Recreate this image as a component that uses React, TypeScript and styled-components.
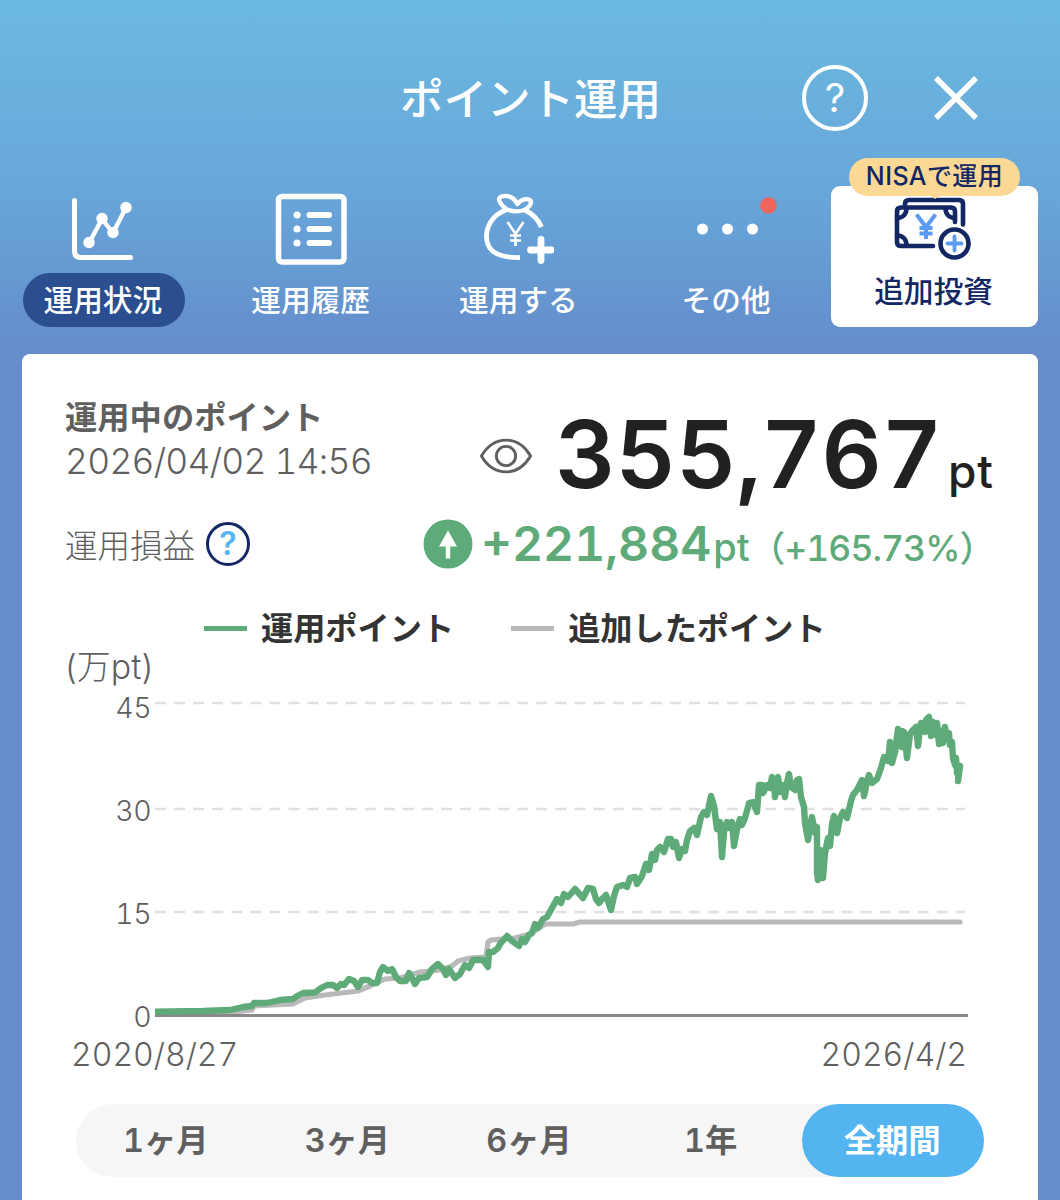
import React from "react";
import styled, { createGlobalStyle, css } from "styled-components";

const sans = `Inter, "Noto Sans CJK JP", sans-serif`;
const cjk = `"Noto Sans CJK JP", Inter, sans-serif`;

const figures = css`
  font-optical-sizing: none;
  font-variant-numeric: tabular-nums;
  font-kerning: none;
`;

const Global = createGlobalStyle`
  * { box-sizing: border-box; }
  body {
    margin: 0;
    font-family: ${sans};
  }
`;

const Screen = styled.main`
  width: 1060px;
  height: 1200px;
  overflow: hidden;
  display: flex;
  flex-direction: column;
  background: linear-gradient(#6bb9e1 0, #69aedc 120px, #68a5d9 200px, #659ad2 270px, #658ccb 350px, #658ccb 100%);
`;

const Header = styled.header`
  height: 185px;
  padding: 10px 81px 0 0;
  display: grid;
  grid-template-columns: 400px 260px 1fr;
  align-items: center;
`;

const Title = styled.h1`
  grid-column: 2;
  margin: 0;
  padding-bottom: 2px;
  font: 500 43.5px/60px ${cjk};
  color: #fff;
  white-space: nowrap;
`;

const HeaderActions = styled.div`
  display: flex;
  justify-content: flex-end;
  align-items: center;
  gap: 65px;
`;

const IconButton = styled.button`
  border: 0;
  padding: 0;
  background: none;
  display: flex;
  color: inherit;
`;

const HelpRing = styled.span<{ $size: number; $border: number; $ring: string; $mark: string; $font: number; $weight: number }>`
  width: ${(p) => p.$size}px;
  height: ${(p) => p.$size}px;
  border: ${(p) => p.$border}px solid ${(p) => p.$ring};
  border-radius: 50%;
  display: flex;
  align-items: center;
  justify-content: center;
  font: ${(p) => p.$weight} ${(p) => p.$font}px/1 ${sans};
  color: ${(p) => p.$mark};
`;

const Nav = styled.nav`
  height: 169px;
  display: grid;
  grid-template-columns: repeat(4, 207.75px) 207px;
`;

const NavItem = styled.a`
  display: flex;
  flex-direction: column;
  align-items: center;
  color: #fff;
`;

const NavIcon = styled.span<{ $shift?: number }>`
  height: 88px;
  padding: 0 ${(p) => p.$shift ?? 2}px 1px 0;
  display: flex;
  align-items: center;
`;

const NavLabel = styled.span<{ $active?: boolean }>`
  height: 54px;
  padding: 0 23px 0 21px;
  border-radius: 27px;
  background: ${(p) => (p.$active ? "#2a4e8f" : "transparent")};
  font: 500 29.7px/51px ${cjk};
  white-space: nowrap;
`;

const InvestCard = styled.a`
  position: relative;
  height: 141px;
  margin-top: 1px;
  padding-top: 9px;
  border-radius: 9px;
  background: #fff;
  display: flex;
  flex-direction: column;
  align-items: center;
  color: #132765;
`;

const InvestLabel = styled.span`
  margin-top: 2px;
  padding-right: 2px;
  font: 500 29.7px/54px ${cjk};
`;

const Badge = styled.span`
  position: absolute;
  top: -28px;
  left: 18px;
  width: 171px;
  height: 38px;
  border-radius: 19px;
  background: #fbd995;
  font: 500 25px/37px ${sans};
  letter-spacing: 0.4px;
  text-align: center;
  white-space: nowrap;
  &::after {
    content: "";
    position: absolute;
    left: 80px;
    top: 37px;
    border: 6px solid transparent;
    border-top: 4px solid #fbd995;
    border-bottom: 0;
  }
`;

const Card = styled.section`
  flex: 1;
  margin: 0 22px;
  padding: 39px 44px 0 43px;
  border-radius: 8px 8px 0 0;
  background: #fff;
  color: #5f5f5f;
`;

const BalanceRow = styled.div`
  height: 112px;
  display: flex;
  justify-content: space-between;
`;

const Heading = styled.h2`
  margin: 0;
  font: 700 32.3px/44px ${cjk};
`;

const Stamp = styled.time`
  display: block;
  font: 300 35.5px/49px ${sans};
  letter-spacing: -0.78px;
  ${figures}
`;

const Balance = styled.div`
  display: flex;
  align-items: baseline;
  color: #232021;
`;

const EyeBox = styled.span`
  align-self: center;
  display: flex;
  margin: 14px 22px 0 0;
`;

const BigNumber = styled.strong`
  font: 600 94px/122px ${sans};
  letter-spacing: -0.5px;
  ${figures}
`;

const Unit = styled.span<{ $size: number; $gap?: number; $weight?: number; $spacing?: number }>`
  margin-left: ${(p) => p.$gap ?? 0}px;
  font: ${(p) => p.$weight ?? 500} ${(p) => p.$size}px/1 ${sans};
  letter-spacing: ${(p) => p.$spacing ?? 0}px;
  ${figures}
`;

const ProfitRow = styled.div`
  height: 95px;
  display: flex;
  justify-content: space-between;
  align-items: flex-start;
  padding-top: 14px;
`;

const ProfitLabel = styled.div`
  height: 50px;
  display: flex;
  align-items: center;
  gap: 11px;
  font: 300 32.5px/48px ${cjk};
`;

const Profit = styled.div`
  display: flex;
  align-items: baseline;
  color: #5faa79;
`;

const ArrowDot = styled.span`
  align-self: center;
  display: flex;
  margin-right: 8px;
`;

const ProfitNumber = styled.span`
  font: 600 48px/50px ${sans};
  ${figures}
`;

const Legend = styled.div`
  height: 52px;
  padding-left: 139px;
  display: flex;
  align-items: center;
`;

const LegendItem = styled.span<{ $color: string }>`
  display: flex;
  align-items: center;
  gap: 14px;
  margin-right: 57px;
  font: 700 32.2px/48px ${cjk};
  color: #333;
  &::before {
    content: "";
    width: 43px;
    height: 5px;
    margin-top: 4px;
    background: ${(p) => p.$color};
  }
`;

const AxisUnit = styled.div`
  height: 36px;
  font: 300 34px/30px ${sans};
`;

const Plot = styled.div`
  display: grid;
  grid-template-columns: 86px 1fr;
  column-gap: 4px;
  height: 336px;
`;

const Ticks = styled.div`
  margin-top: -32px;
  font: 300 28.5px/103px ${sans};
  letter-spacing: -0.6px;
  ${figures}
  text-align: right;
`;

const Dates = styled.div`
  height: 72px;
  padding: 0 27px 0 6px;
  display: flex;
  justify-content: space-between;
  font: 300 32px/62px ${sans};
  ${figures}
`;

const Periods = styled.div`
  height: 73px;
  margin: 8px 10px 0 11px;
  border-radius: 37px;
  background: #f6f6f6;
  display: grid;
  grid-template-columns: repeat(5, 1fr);
`;

const Period = styled.button<{ $on: boolean }>`
  border: 0;
  padding: 0 2px 0 0;
  border-radius: 37px;
  background: ${(p) => (p.$on ? "#54b4f0" : "transparent")};
  color: ${(p) => (p.$on ? "#fff" : "#5f5f5f")};
  font: 600 32.3px/72px ${sans};
  font-variant-numeric: tabular-nums;
`;

const growth =
  "155,1011.7 203,1011 230,1010 243,1007 252,1006 254,1003 267,1003 280,1000 293,999 297,996 303,993 315,992.5 321,988 327,985 333,985 337,988 341,984 344,985 349,979 354,981 358,987 362,980 368,980 372,983 377,983 380,972 383,967 388,971 392,969 396,977 400,981 406,981 409,973 412,978 415,984 419,978 427,977 432,969 438,964 443,969 446,975 449,969 455,978 460,974 465,965 469,968 473,960 483,960 488,967 489,952 493,952 498,948 500,944 507,936 512,941 519,946 522,939 525,942 529,935 532,933 535,924 538,928 543,919 547,917 552,908 557,899 561,903 564,894 568,897 575,889 583,898 588,888 593,889 596,899 599,903 602,899 606,895 611,910 614,896 617,887 623,885 627,887 630,878 635,877 637,884 642,876 646,864 649,870 652,854 655,860 657,850 660,847 664,852 668,839 671,839 673,847 676,842 679,858 682,849 685,851 687,840 690,831 694,828 697,835 701,817 704,812 707,815 711,796 714,806 717,829 720,822 722,857 724,832 727,822 730,828 732,822 734,846 737,829 740,819 742,825 745,818 749,803 753,802 757,812 759,785 762,785 763,793 767,785 770,788 772,777 774,783 775,797 777,783 778,777 780,792 783,785 785,797 787,783 789,774 791,787 795,790 797,780 799,779 801,797 804,807 805,823 808,840 810,825 812,817 815,833 817,827 817,873 818,880 820,850 821,872 823,878 825,853 828,838 830,846 832,824 834,816 837,833 840,818 843,812 847,818 851,801 853,795 857,790 862,780 864,796 867,781 869,775 872,783 877,779 881,768 884,757 888,761 890,742 892,763 895,752 898,729 900,746 902,731 902,747 904,732 907,758 910,734 913,730 916,727 918,746 920,729 921,723 925,732 926,720 929,717 931,736 933,722 936,735 937,723 939,744 941,731 943,743 945,727 947,739 949,733 950,745 952,742 953,758 955,765 956,758 957,773 959,768 958,781 960,766";

const deposits =
  "155,1013 235,1012 252,1010 254,1006 293,1004 305,998 325,995 358,991 370,986 385,979 400,978 420,972 440,970 452,966 458,961 470,958 486,957 488,942 491,940 515,938 530,934 545,924 573,924 580,922 960,922";

const periods = ["1ヶ月", "3ヶ月", "6ヶ月", "1年", "全期間"];

const CloseIcon = () => (
  <svg width="46" height="46" viewBox="0 0 46 46" fill="none" stroke="#fff" strokeWidth="5.600">
    <path d="M3 3 43 43M43 3 3 43" />
  </svg>
);

const TrendIcon = () => (
  <svg width="64" height="64" viewBox="0 0 64 64" fill="none" stroke="#fff" strokeWidth="5" strokeLinecap="round" strokeLinejoin="round">
    <path d="M4.500 3.500V54q0 6.500 6.500 6.500H60.500" />
    <path d="M19 46 32 22 43 36 56 10.500" strokeWidth="4.400" />
    <g fill="#fff" stroke="none">
      <circle cx="19" cy="45.500" r="5.700" />
      <circle cx="32" cy="21.500" r="5.700" />
      <circle cx="43" cy="35.500" r="5.700" />
      <circle cx="56" cy="10.500" r="5.700" />
    </g>
  </svg>
);

const ListIcon = () => (
  <svg width="72" height="72" viewBox="0 0 72 72" fill="none" stroke="#fff" strokeWidth="5.500">
    <rect x="3.500" y="3.500" width="65.500" height="65.500" rx="3.500" />
    <path d="M34.500 22H54M34.500 36H54M34.500 50H54" strokeWidth="6" strokeLinecap="round" />
    <g fill="#fff" stroke="none">
      <circle cx="22" cy="22" r="3.600" />
      <circle cx="22" cy="36" r="3.600" />
      <circle cx="22" cy="50" r="3.600" />
    </g>
  </svg>
);

const BagIcon = () => (
  <svg width="72" height="72" viewBox="0 0 72 72" fill="none" stroke="#fff" strokeWidth="4.800">
    <path d="M24 17C10 22 4 34 4.500 45c1 14 12 20 33.500 19.500" />
    <path d="M43 17c8 4 13 9 16.500 17" />
    <path d="M24 16C17 10 15 5 19.500 3.500c6-2 13 1 16 7.500 4-5 10-6 13-3.500 2 3-2 7-6 9.500-6 2-12 2-18.500-1Z" strokeLinejoin="round" strokeWidth="4.400" />
    <path d="M25.500 29 33.500 41 41.500 29M33.500 41V53M28 42.500H39M28 47.500H39" strokeWidth="2.600" />
    <path d="M59 46.500V67.500M48.500 57H69.500" strokeWidth="6.800" strokeLinecap="round" />
  </svg>
);

const MoreIcon = () => (
  <svg width="84" height="60" viewBox="0 0 84 60" fill="#fff" overflow="visible">
    <circle cx="17.500" cy="30" r="5.500" />
    <circle cx="42.500" cy="30" r="5.500" />
    <circle cx="67.500" cy="30" r="5.500" />
    <circle cx="83.500" cy="6.500" r="8.300" fill="#ee655b" />
  </svg>
);

const CashIcon = () => (
  <svg width="81" height="66" viewBox="0 0 81 66" fill="none" stroke="#132765" strokeWidth="4.600" strokeLinecap="round" strokeLinejoin="round">
    <path d="M11 10V9q0-4 4-4H65q4 0 4 4V29.500" />
    <path d="M39 51H7q-4 0-4-4V16.500q0-4 4-4H57q4 0 4 4V27" />
    <path d="M3 23c6 0 9.500-4 9.500-10M61 23c-6 0-9.500-4-9.500-10M3 40.500c6 0 9.500 4 9.500 10" />
    <path d="M22.500 19.500 32 32 41.500 19.500M32 32V44M25.500 33H38.500M25.500 38.500H38.500" stroke="#5a9af3" strokeWidth="4" strokeLinecap="butt" />
    <circle cx="60.500" cy="48.500" r="14" />
    <path d="M60.500 41.500V55.500M53.500 48.500H67.500" stroke="#5a9af3" strokeWidth="3.800" />
  </svg>
);

const EyeIcon = () => (
  <svg width="54" height="38" viewBox="0 0 56 38" fill="none" stroke="#5f5f5f" strokeWidth="3">
    <path d="M2.500 19C9 8 18 2.500 28 2.500S47 8 53.500 19C47 30 38 35.500 28 35.500S9 30 2.500 19Z" strokeLinejoin="round" />
    <circle cx="28" cy="19" r="10" />
  </svg>
);

const UpIcon = () => (
  <svg width="50" height="50" viewBox="0 0 50 50">
    <circle cx="25" cy="25" r="24.500" fill="#5faa79" />
    <path d="M25 11.500 34 27.500H27.200V39.500H22.800V27.500H16Z" fill="#fff" />
  </svg>
);

const Chart = () => (
  <svg width="840" height="336" viewBox="155 688 840 336" fill="none">
    <path d="M155 703H965M155 809H965M155 912H965" stroke="#e0e0e0" strokeWidth="2.500" strokeDasharray="11 8.070" />
    <polyline points={deposits} stroke="#b9b9b9" strokeWidth="5.200" strokeLinejoin="round" strokeLinecap="round" />
    <path d="M155 1015.500H968" stroke="#888" strokeWidth="2.800" />
    <polyline points={growth} stroke="#5faa79" strokeWidth="6.400" strokeLinejoin="round" strokeLinecap="round" />
  </svg>
);

export default function App() {
  return (
    <Screen>
      <Global />
      <Header>
        <Title>ポイント運用</Title>
        <HeaderActions>
          <IconButton>
            <HelpRing $size={66} $border={4.5} $ring="#fff" $mark="#fff" $font={40} $weight={400}>?</HelpRing>
          </IconButton>
          <IconButton><CloseIcon /></IconButton>
        </HeaderActions>
      </Header>
      <Nav>
        <NavItem>
          <NavIcon $shift={4}><TrendIcon /></NavIcon>
          <NavLabel $active>運用状況</NavLabel>
        </NavItem>
        <NavItem>
          <NavIcon><ListIcon /></NavIcon>
          <NavLabel>運用履歴</NavLabel>
        </NavItem>
        <NavItem>
          <NavIcon><BagIcon /></NavIcon>
          <NavLabel>運用する</NavLabel>
        </NavItem>
        <NavItem>
          <NavIcon $shift={0}><MoreIcon /></NavIcon>
          <NavLabel>その他</NavLabel>
        </NavItem>
        <InvestCard>
          <Badge>NISAで運用</Badge>
          <CashIcon />
          <InvestLabel>追加投資</InvestLabel>
        </InvestCard>
      </Nav>
      <Card>
        <BalanceRow>
          <div>
            <Heading>運用中のポイント</Heading>
            <Stamp>2026/04/02 14:56</Stamp>
          </div>
          <Balance>
            <EyeBox><EyeIcon /></EyeBox>
            <BigNumber>355,767</BigNumber>
            <Unit $size={46} $gap={6} $spacing={1}>pt</Unit>
          </Balance>
        </BalanceRow>
        <ProfitRow>
          <ProfitLabel>
            運用損益
            <HelpRing $size={44} $border={3} $ring="#132765" $mark="#54b4f0" $font={32} $weight={600}>?</HelpRing>
          </ProfitLabel>
          <Profit>
            <ArrowDot><UpIcon /></ArrowDot>
            <ProfitNumber>+221,884</ProfitNumber>
            <Unit $size={38} $gap={2}>pt</Unit>
            <Unit $size={35.5} $spacing={-0.95}>（+165.73%）</Unit>
          </Profit>
        </ProfitRow>
        <Legend>
          <LegendItem $color="#5faa79">運用ポイント</LegendItem>
          <LegendItem $color="#b9b9b9">追加したポイント</LegendItem>
        </Legend>
        <AxisUnit>(万pt)</AxisUnit>
        <Plot>
          <Ticks>
            <div>45</div>
            <div>30</div>
            <div>15</div>
            <div>0</div>
          </Ticks>
          <Chart />
        </Plot>
        <Dates>
          <span>2020/8/27</span>
          <span>2026/4/2</span>
        </Dates>
        <Periods>
          {periods.map((label) => (
            <Period key={label} $on={label === "全期間"}>{label}</Period>
          ))}
        </Periods>
      </Card>
    </Screen>
  );
}
